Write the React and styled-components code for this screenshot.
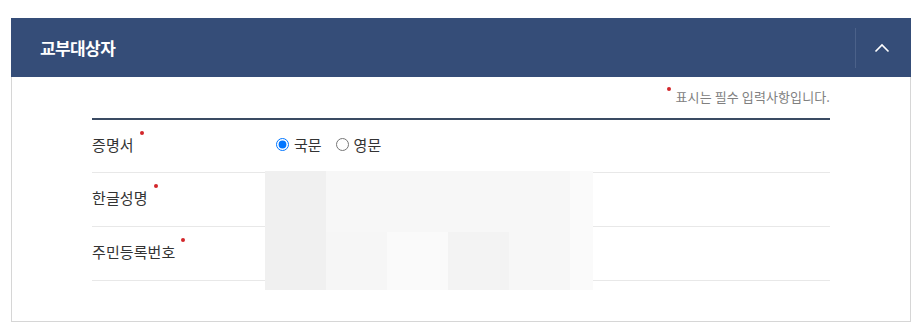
import React, { useState } from "react";
import styled, { createGlobalStyle } from "styled-components";

const GlobalStyle = createGlobalStyle`
  html, body {
    margin: 0;
    padding: 0;
    background: #ffffff;
  }
  body {
    font-family: "Noto Sans CJK KR", "Noto Sans", sans-serif;
    color: #333333;
  }
`;

const Page = styled.div`
  padding: 18px 9px 0 11px;
`;

const Panel = styled.section`
  width: 900px;
`;

const Header = styled.div`
  display: flex;
  align-items: center;
  height: 59px;
  background: #354d78;
  padding-left: 29px;
  box-sizing: border-box;
`;

const Title = styled.h2`
  flex: 1;
  margin: 0;
  font-size: 17px;
  font-weight: 700;
  letter-spacing: -0.6px;
  color: #ffffff;
`;

const Divider = styled.span`
  width: 1px;
  height: 40px;
  background: #4b6189;
`;

const ToggleButton = styled.button`
  display: flex;
  align-items: center;
  justify-content: center;
  width: 55px;
  height: 59px;
  padding: 0 4px 0 0;
  border: 0;
  background: transparent;
  cursor: pointer;
`;

const Body = styled.div`
  border: 1px solid #d6d6d6;
  border-top: 0;
  padding: 12px 80px 40px 80px;
`;

const Note = styled.p`
  display: flex;
  justify-content: flex-end;
  align-items: flex-start;
  gap: 5px;
  margin: 0 0 13px;
  height: 16px;
  line-height: 16px;
  font-size: 13px;
  color: #808080;
  letter-spacing: 0.1px;
`;

const Dot = styled.i`
  display: inline-block;
  flex: none;
  width: 4px;
  height: 4px;
  border-radius: 50%;
  background: #d3262b;
  margin-top: ${(p) => p.$top || 0}px;
  margin-left: ${(p) => p.$left || 0}px;
`;

const Table = styled.div`
  position: relative;
  border-top: 2px solid #3a4b63;
`;

const Row = styled.div`
  display: flex;
  align-items: center;
  box-sizing: border-box;
  height: 53px;
  padding-bottom: 3px;
  border-bottom: 1px solid #e8e8e8;

  & + & {
    height: 54px;
  }
`;

const Label = styled.div`
  display: flex;
  align-items: flex-start;
  width: 184px;
  font-size: 15px;
  line-height: 22px;
  color: #333333;
  letter-spacing: 0.1px;
`;

const Value = styled.div`
  display: flex;
  align-items: center;
  gap: 14px;
  font-size: 15px;
  color: #333333;
`;

const RadioLabel = styled.label`
  display: flex;
  align-items: center;
  gap: 5px;
  cursor: pointer;

  input {
    margin: 0;
    width: 13px;
    height: 13px;
    accent-color: #0075ff;
  }
`;

const Mosaic = styled.div`
  position: absolute;
  left: 173px;
  top: 51px;
  display: grid;
  grid-template-columns: 61px 61px 61px 61px 61px 23px;
  grid-template-rows: 61px 58px;
`;

const Cell = styled.span`
  background: ${(p) => p.$c};
`;

const cells = [
  "#f0f0f0", "#f7f7f7", "#f7f7f7", "#f7f7f7", "#f7f7f7", "#fafafa",
  "#f0f0f0", "#f6f6f6", "#fafafa", "#f3f3f3", "#f7f7f7", "#fafafa",
];

function Chevron() {
  return (
    <svg width="16" height="10" viewBox="0 0 16 10">
      <polyline
        points="1.5,8.5 8,2 14.5,8.5"
        fill="none"
        stroke="#ffffff"
        strokeWidth="1.6"
      />
    </svg>
  );
}

function FieldLabel({ children }) {
  return (
    <Label>
      <span>{children}</span>
      <Dot $top={-3} $left={6} />
    </Label>
  );
}

export default function App() {
  const [lang, setLang] = useState("ko");

  return (
    <>
      <GlobalStyle />
      <Page>
        <Panel>
          <Header>
            <Title>교부대상자</Title>
            <Divider />
            <ToggleButton aria-label="접기">
              <Chevron />
            </ToggleButton>
          </Header>
          <Body>
            <Note>
              <Dot $top={-2} />
              <span>표시는 필수 입력사항입니다.</span>
            </Note>
            <Table>
              <Row>
                <FieldLabel>증명서</FieldLabel>
                <Value>
                  <RadioLabel>
                    <input
                      type="radio"
                      name="doc"
                      checked={lang === "ko"}
                      onChange={() => setLang("ko")}
                    />
                    국문
                  </RadioLabel>
                  <RadioLabel>
                    <input
                      type="radio"
                      name="doc"
                      checked={lang === "en"}
                      onChange={() => setLang("en")}
                    />
                    영문
                  </RadioLabel>
                </Value>
              </Row>
              <Row>
                <FieldLabel>한글성명</FieldLabel>
              </Row>
              <Row>
                <FieldLabel>주민등록번호</FieldLabel>
              </Row>
              <Mosaic aria-hidden="true">
                {cells.map((c, i) => (
                  <Cell key={i} $c={c} />
                ))}
              </Mosaic>
            </Table>
          </Body>
        </Panel>
      </Page>
    </>
  );
}
